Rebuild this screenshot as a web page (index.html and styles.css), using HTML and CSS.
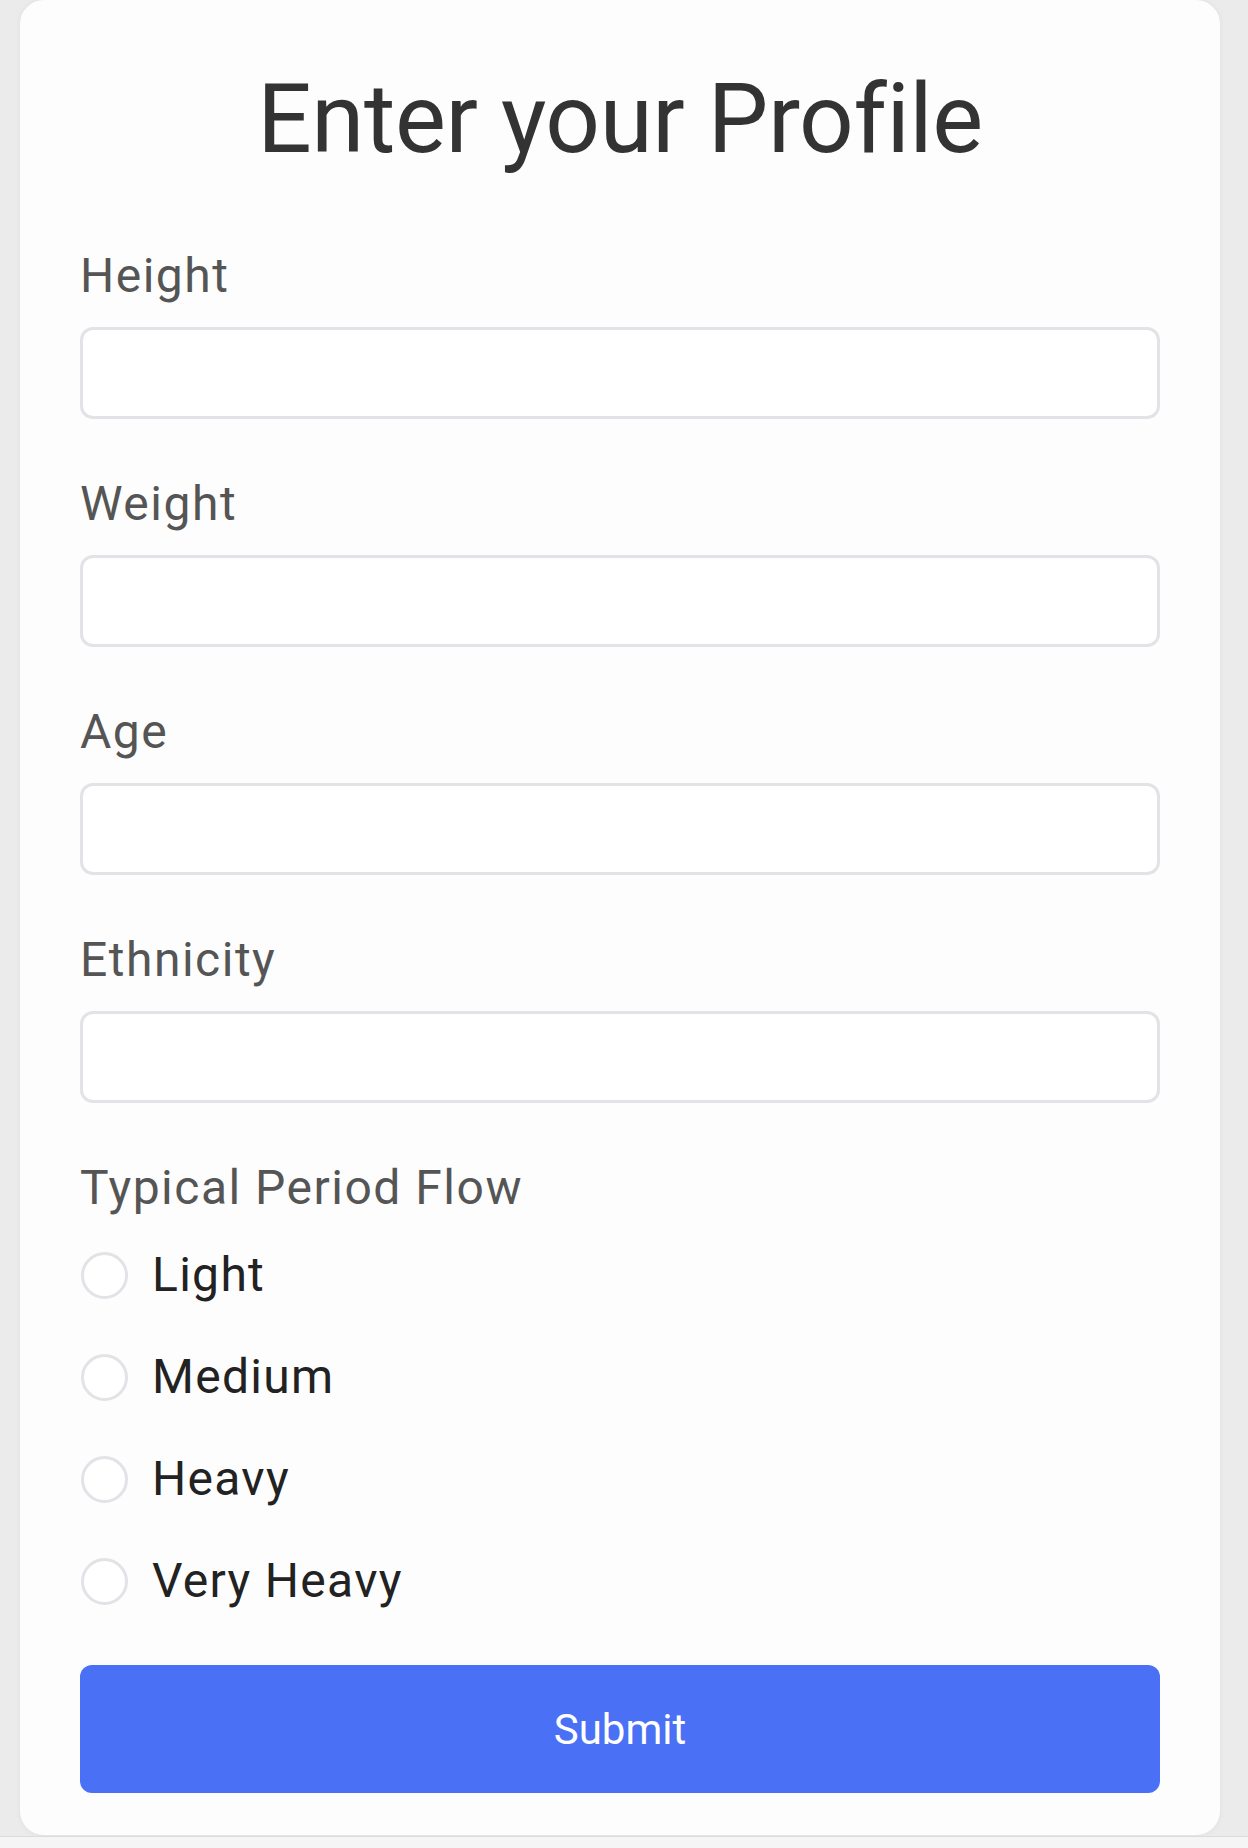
FILE: index.html
```html
<!DOCTYPE html>
<html lang="en">
<head>
  <meta charset="UTF-8" />
  <meta name="viewport" content="width=device-width, initial-scale=1" />
  <title>Profile</title>
  <link rel="stylesheet" href="styles.css">
</head>
<body>
  <div class="page">
    <form class="profile-card" autocomplete="off">
      <h1 class="profile-title">Enter your Profile</h1>

      <div class="field">
        <label for="height">Height</label>
        <input type="text" id="height" name="height" />
      </div>
      <div class="field">
        <label for="weight">Weight</label>
        <input type="text" id="weight" name="weight" />
      </div>
      <div class="field">
        <label for="age">Age</label>
        <input type="text" id="age" name="age" />
      </div>
      <div class="field">
        <label for="ethnicity">Ethnicity</label>
        <input type="text" id="ethnicity" name="ethnicity" />
      </div>

      <div class="field-group">
        <div class="group-label">Typical Period Flow</div>
        <label class="radio-row"><input type="radio" name="flow" value="light" /><span>Light</span></label>
        <label class="radio-row"><input type="radio" name="flow" value="medium" /><span>Medium</span></label>
        <label class="radio-row"><input type="radio" name="flow" value="heavy" /><span>Heavy</span></label>
        <label class="radio-row"><input type="radio" name="flow" value="very-heavy" /><span>Very Heavy</span></label>
      </div>

      <button type="submit" class="submit-btn">Submit</button>
    </form>
    <div class="bottom-bar"></div>
  </div>
</body>
</html>
```

FILE: styles.css
```css
body {
  margin: 0;
  font-family: Roboto, 'Liberation Sans', sans-serif;
  background: #ebebeb;
  color: #333;
}

.page {
  min-height: 1848px;
  display: flex;
  flex-direction: column;
}

.profile-card {
  width: 1200px;
  margin-left: 20px;
  box-sizing: border-box;
  padding: 62px 60px 42px;
  background: #fdfdfd;
  border-radius: 24px;
  box-shadow: 0 0 6px rgba(0, 0, 0, 0.05);
  display: flex;
  flex-direction: column;
}

.profile-title {
  margin: 0 0 63px;
  font-size: 96px;
  line-height: 115px;
  font-weight: 400;
  letter-spacing: -0.4px;
  text-align: center;
  color: #333;
}

.field {
  display: flex;
  flex-direction: column;
  margin-bottom: 49px;
}

.field label,
.group-label {
  font-size: 48px;
  line-height: 72px;
  letter-spacing: 1.5px;
  color: #555;
}

.field label {
  margin-bottom: 15px;
}

.field input {
  height: 92px;
  box-sizing: border-box;
  border: 3px solid #e2e3e7;
  border-radius: 13px;
  background: #fff;
  padding: 0 24px;
  font-size: 42px;
  font-family: inherit;
  outline: none;
}

.field-group {
  display: flex;
  flex-direction: column;
}

.radio-row {
  height: 102px;
  display: flex;
  align-items: center;
  gap: 24px;
  font-size: 48px;
  line-height: 72px;
  letter-spacing: 1.3px;
  color: #222;
  cursor: pointer;
}

.radio-row input {
  appearance: none;
  -webkit-appearance: none;
  margin: 0 0 0 1px;
  width: 47px;
  height: 47px;
  border: 3px solid #e2e3e7;
  border-radius: 50%;
  background: #fff;
  flex-shrink: 0;
}

.radio-row input:checked {
  border-color: #4a70f6;
  box-shadow: inset 0 0 0 8px #fff;
  background: #4a70f6;
}

.submit-btn {
  margin-top: 33px;
  height: 128px;
  border: none;
  border-radius: 12px;
  background: #4a70f6;
  color: #fff;
  font-family: inherit;
  font-size: 42px;
  cursor: pointer;
}

.submit-btn:hover {
  background: #3d62e4;
}

.bottom-bar {
  flex: 1;
  margin-top: 1px;
  border-top: 1px solid #dcdcdc;
  background: #f5f5f5;
}
```
